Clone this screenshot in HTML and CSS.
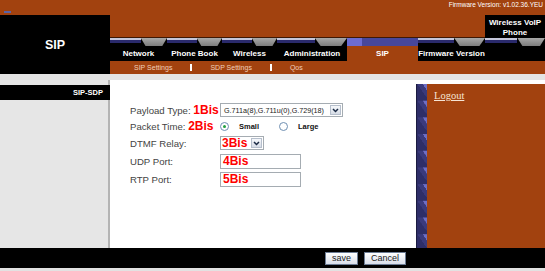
FILE: index.html
```html
<!DOCTYPE html>
<html lang="en">

<head>
    <meta charset="UTF-8">
    <title>SIP - SDP Settings</title>
    <link rel="stylesheet" href="styles.css">
</head>

<body>
    <div class="page">
        <div class="topbar">
            <span class="mark"></span>
            <span class="firmware">Firmware Version: v1.02.36.YEU</span>
        </div>

        <!-- header: logo + tabs -->
        <div class="head">
            <div class="logo">SIP</div>
            <div class="head-main">
                <div class="title-row">
                    <div class="product">Wireless VoIP<br>Phone</div>
                </div>
                <ul class="tabs">
                    <li class="tab t-net"><span class="cap"><i class="line"></i><i class="notch"></i></span><a href="#">Network</a></li>
                    <li class="tab t-book"><span class="cap"><i class="line"></i><i class="notch"></i></span><a href="#">Phone Book</a></li>
                    <li class="tab t-wifi"><span class="cap"><i class="line"></i><i class="notch"></i></span><a href="#">Wireless</a></li>
                    <li class="tab t-admin"><span class="cap"><i class="line"></i><i class="notch"></i></span><a href="#">Administration</a></li>
                    <li class="tab t-sip active"><span class="cap"></span><a href="#">SIP</a></li>
                    <li class="tab t-fw"><span class="cap"><i class="line"></i><i class="notch"></i></span><a href="#">Firmware Version</a></li>
                    <li class="tab t-rest"><span class="cap"><i class="line"></i><i class="notch"></i></span><a></a></li>
                </ul>
                <div class="subnav">
                    <a href="#">SIP Settings</a>
                    <span class="sep"></span>
                    <a href="#">SDP Settings</a>
                    <span class="sep"></span>
                    <a href="#">Qos</a>
                </div>
            </div>
        </div>

        <div class="rule"></div>

        <!-- content -->
        <div class="content">
            <div class="side">
                <div class="side-title">SIP-SDP</div>
            </div>

            <div class="main">
                <div class="row short">
                    <span class="label">Payload Type: <b class="bis">1Bis</b></span>
                    <span class="select wide">
                        <span class="select-text">G.711a(8),G.711u(0),G.729(18)</span>
                        <span class="arrow"><svg width="7" height="5" viewBox="0 0 7 5"><path d="M1 1 L3.5 3.5 L6 1" fill="none" stroke="#1a2a44" stroke-width="1.5"/></svg></span>
                    </span>
                </div>
                <div class="row short">
                    <span class="label">Packet Time: <b class="bis">2Bis</b></span>
                    <span class="radio on"></span>
                    <span class="opt">Small</span>
                    <span class="radio second"></span>
                    <span class="opt">Large</span>
                </div>
                <div class="row">
                    <span class="label">DTMF Relay:</span>
                    <span class="select narrow">
                        <b class="bis">3Bis</b>
                        <span class="arrow"><svg width="7" height="5" viewBox="0 0 7 5"><path d="M1 1 L3.5 3.5 L6 1" fill="none" stroke="#1a2a44" stroke-width="1.5"/></svg></span>
                    </span>
                </div>
                <div class="row">
                    <span class="label">UDP Port:</span>
                    <span class="field"><b class="bis">4Bis</b></span>
                </div>
                <div class="row">
                    <span class="label">RTP Port:</span>
                    <span class="field"><b class="bis">5Bis</b></span>
                </div>
            </div>

            <div class="aside">
                <div class="strip"></div>
                <div class="panel"><a href="#" class="logout">Logout</a></div>
            </div>
        </div>

        <div class="footer">
            <button class="btn btn-save">save</button>
            <button class="btn btn-cancel">Cancel</button>
        </div>
        <div class="footer-rule"></div>
    </div>
</body>

</html>
```

FILE: styles.css
```css
* {
    box-sizing: border-box;
}

body {
    margin: 0;
    font-family: "Liberation Sans", Arial, sans-serif;
    background: #fff;
}

.page {
    width: 545px;
}

/* top bar */
.topbar {
    height: 15px;
    background: #a2420f;
    display: flex;
    justify-content: space-between;
}

.mark {
    width: 7px;
    height: 2px;
    margin: 11px 0 0 4px;
    background: #5a64a8;
}

.firmware {
    color: #fff;
    font-size: 6.5px;
    line-height: 7px;
    padding: 1px 2px 0 0;
}

/* header */
.head {
    display: flex;
    height: 59px;
}

.logo {
    width: 110px;
    background: #000;
    color: #fff;
    font-weight: bold;
    font-size: 12.5px;
    display: flex;
    align-items: center;
    justify-content: center;
}

.head-main {
    flex: 1;
    display: flex;
    flex-direction: column;
}

.title-row {
    height: 23px;
    background: #a2420f;
    border-bottom: 1px solid #3e1804;
    display: flex;
    justify-content: flex-end;
}

.product {
    width: 60px;
    margin-bottom: -1px;
    padding-top: 3px;
    background: #000;
    color: #fff;
    font-weight: bold;
    font-size: 8px;
    line-height: 10px;
    text-align: center;
}

.tabs {
    display: flex;
    height: 23px;
    margin: 0;
    padding: 0;
    list-style: none;
    background: #000;
}

.tab {
    display: flex;
    flex-direction: column;
}

.t-net { width: 57px; }
.t-book { width: 55px; }
.t-wifi { width: 55px; }
.t-admin { width: 70px; }
.t-sip { width: 71px; }
.t-fw { width: 67px; }
.t-rest { flex: 1; }

.cap {
    display: flex;
    height: 8px;
}

.cap .line {
    flex: 1;
    background: linear-gradient(#c4c6da 0 2px, #2a2a6c 2px 5px, #000 5px);
}

.cap .notch {
    width: 46%;
    background: linear-gradient(#a8a8a8, #7c7c7c);
    clip-path: polygon(0 0, 100% 0, 82% 100%, 18% 100%);
}

.tab a {
    flex: 1;
    display: flex;
    align-items: center;
    justify-content: center;
    color: #fff;
    font-weight: bold;
    font-size: 8px;
    text-decoration: none;
    white-space: nowrap;
}

.tab.active {
    background: #a2420f;
}

.tab.active .cap {
    background: linear-gradient(90deg, #6c6cd2 0 15px, #47479c 15px);
}

.subnav {
    height: 13px;
    background: #a2420f;
    display: flex;
    align-items: center;
    gap: 18px;
    padding-left: 24px;
}

.subnav a {
    color: #f0cfba;
    font-size: 7px;
    text-decoration: none;
}

.subnav .sep {
    width: 2px;
    height: 7px;
    background: #fff;
}

.rule {
    height: 6px;
    background: #e4e4e4;
}

/* content */
.content {
    display: flex;
    height: 168px;
}

.side {
    width: 110px;
    padding-top: 5px;
    background: #e6e6e6;
    border-right: 2px solid #b4b4b4;
}

.side-title {
    height: 15px;
    margin-right: -2px;
    padding-right: 7px;
    background: #000;
    color: #fff;
    font-weight: bold;
    font-size: 7.5px;
    line-height: 15px;
    text-align: right;
}

.main {
    width: 306px;
    padding: 22px 0 0 20px;
    background: #fff;
}

.row {
    display: flex;
    align-items: center;
    height: 18px;
    font-size: 9.6px;
    color: #444;
}

.row.short {
    height: 16px;
}

.label {
    width: 90px;
    flex: none;
    white-space: nowrap;
}

.bis {
    color: #f00;
    font-weight: bold;
    font-size: 12px;
}

.select {
    display: flex;
    align-items: center;
    height: 14px;
    border: 1px solid #a5acb2;
    background: #fff;
}

.select.wide {
    width: 123px;
}

.select.narrow {
    width: 44px;
    padding-left: 1px;
}

.select.narrow .bis {
    flex: 1;
}

.select-text {
    flex: 1;
    padding-left: 3px;
    font-size: 7.2px;
    color: #222;
    white-space: nowrap;
}

.arrow {
    width: 11px;
    height: 10px;
    margin-right: 1px;
    border: 1px solid #b6bfcc;
    background: linear-gradient(#f6f8fb, #d6dce6);
    display: flex;
    align-items: center;
    justify-content: center;
}

.field {
    width: 81px;
    height: 15px;
    padding-left: 2px;
    border: 1px solid #a5acb2;
    display: flex;
    align-items: center;
}

.radio {
    width: 9px;
    height: 9px;
    border-radius: 50%;
    border: 1px solid #6f8fb2;
    background: #fff;
    display: flex;
    align-items: center;
    justify-content: center;
}

.radio.on::after {
    content: "";
    width: 3px;
    height: 3px;
    border-radius: 50%;
    background: #22a040;
}

.radio.second {
    margin-left: 20px;
}

.opt {
    margin-left: 10px;
    font-size: 7.5px;
    font-weight: bold;
    color: #111;
}

.aside {
    flex: 1;
    display: flex;
    margin-top: 4px;
}

.strip {
    width: 11px;
    border-left: 1px solid #1a1a40;
    background-color: #2e2e68;
    background-image: linear-gradient(235deg, #6e6ec4 0 20%, #3a3a7c 20% 45%, transparent 45%);
    background-size: 10px 16.7px;
}

.panel {
    flex: 1;
    padding: 1px 0 0 7px;
    background: #a2420f;
}

.logout {
    font-family: "Liberation Serif", "Times New Roman", serif;
    font-size: 10.5px;
    color: #f6e4d4;
    text-decoration: underline;
}

/* footer */
.footer {
    height: 20px;
    display: flex;
    align-items: center;
    gap: 6px;
    padding-left: 325px;
    background: #000;
}

.btn {
    height: 13px;
    padding: 0;
    border: 1px solid #6c7c94;
    background: linear-gradient(#ffffff, #d9dfea);
    color: #222;
    font-family: "Liberation Sans", Arial, sans-serif;
    font-size: 9px;
    line-height: 11px;
}

.btn-save {
    width: 33px;
}

.btn-cancel {
    width: 42px;
}

.footer-rule {
    height: 3px;
    background: #e2e2e2;
}
```
